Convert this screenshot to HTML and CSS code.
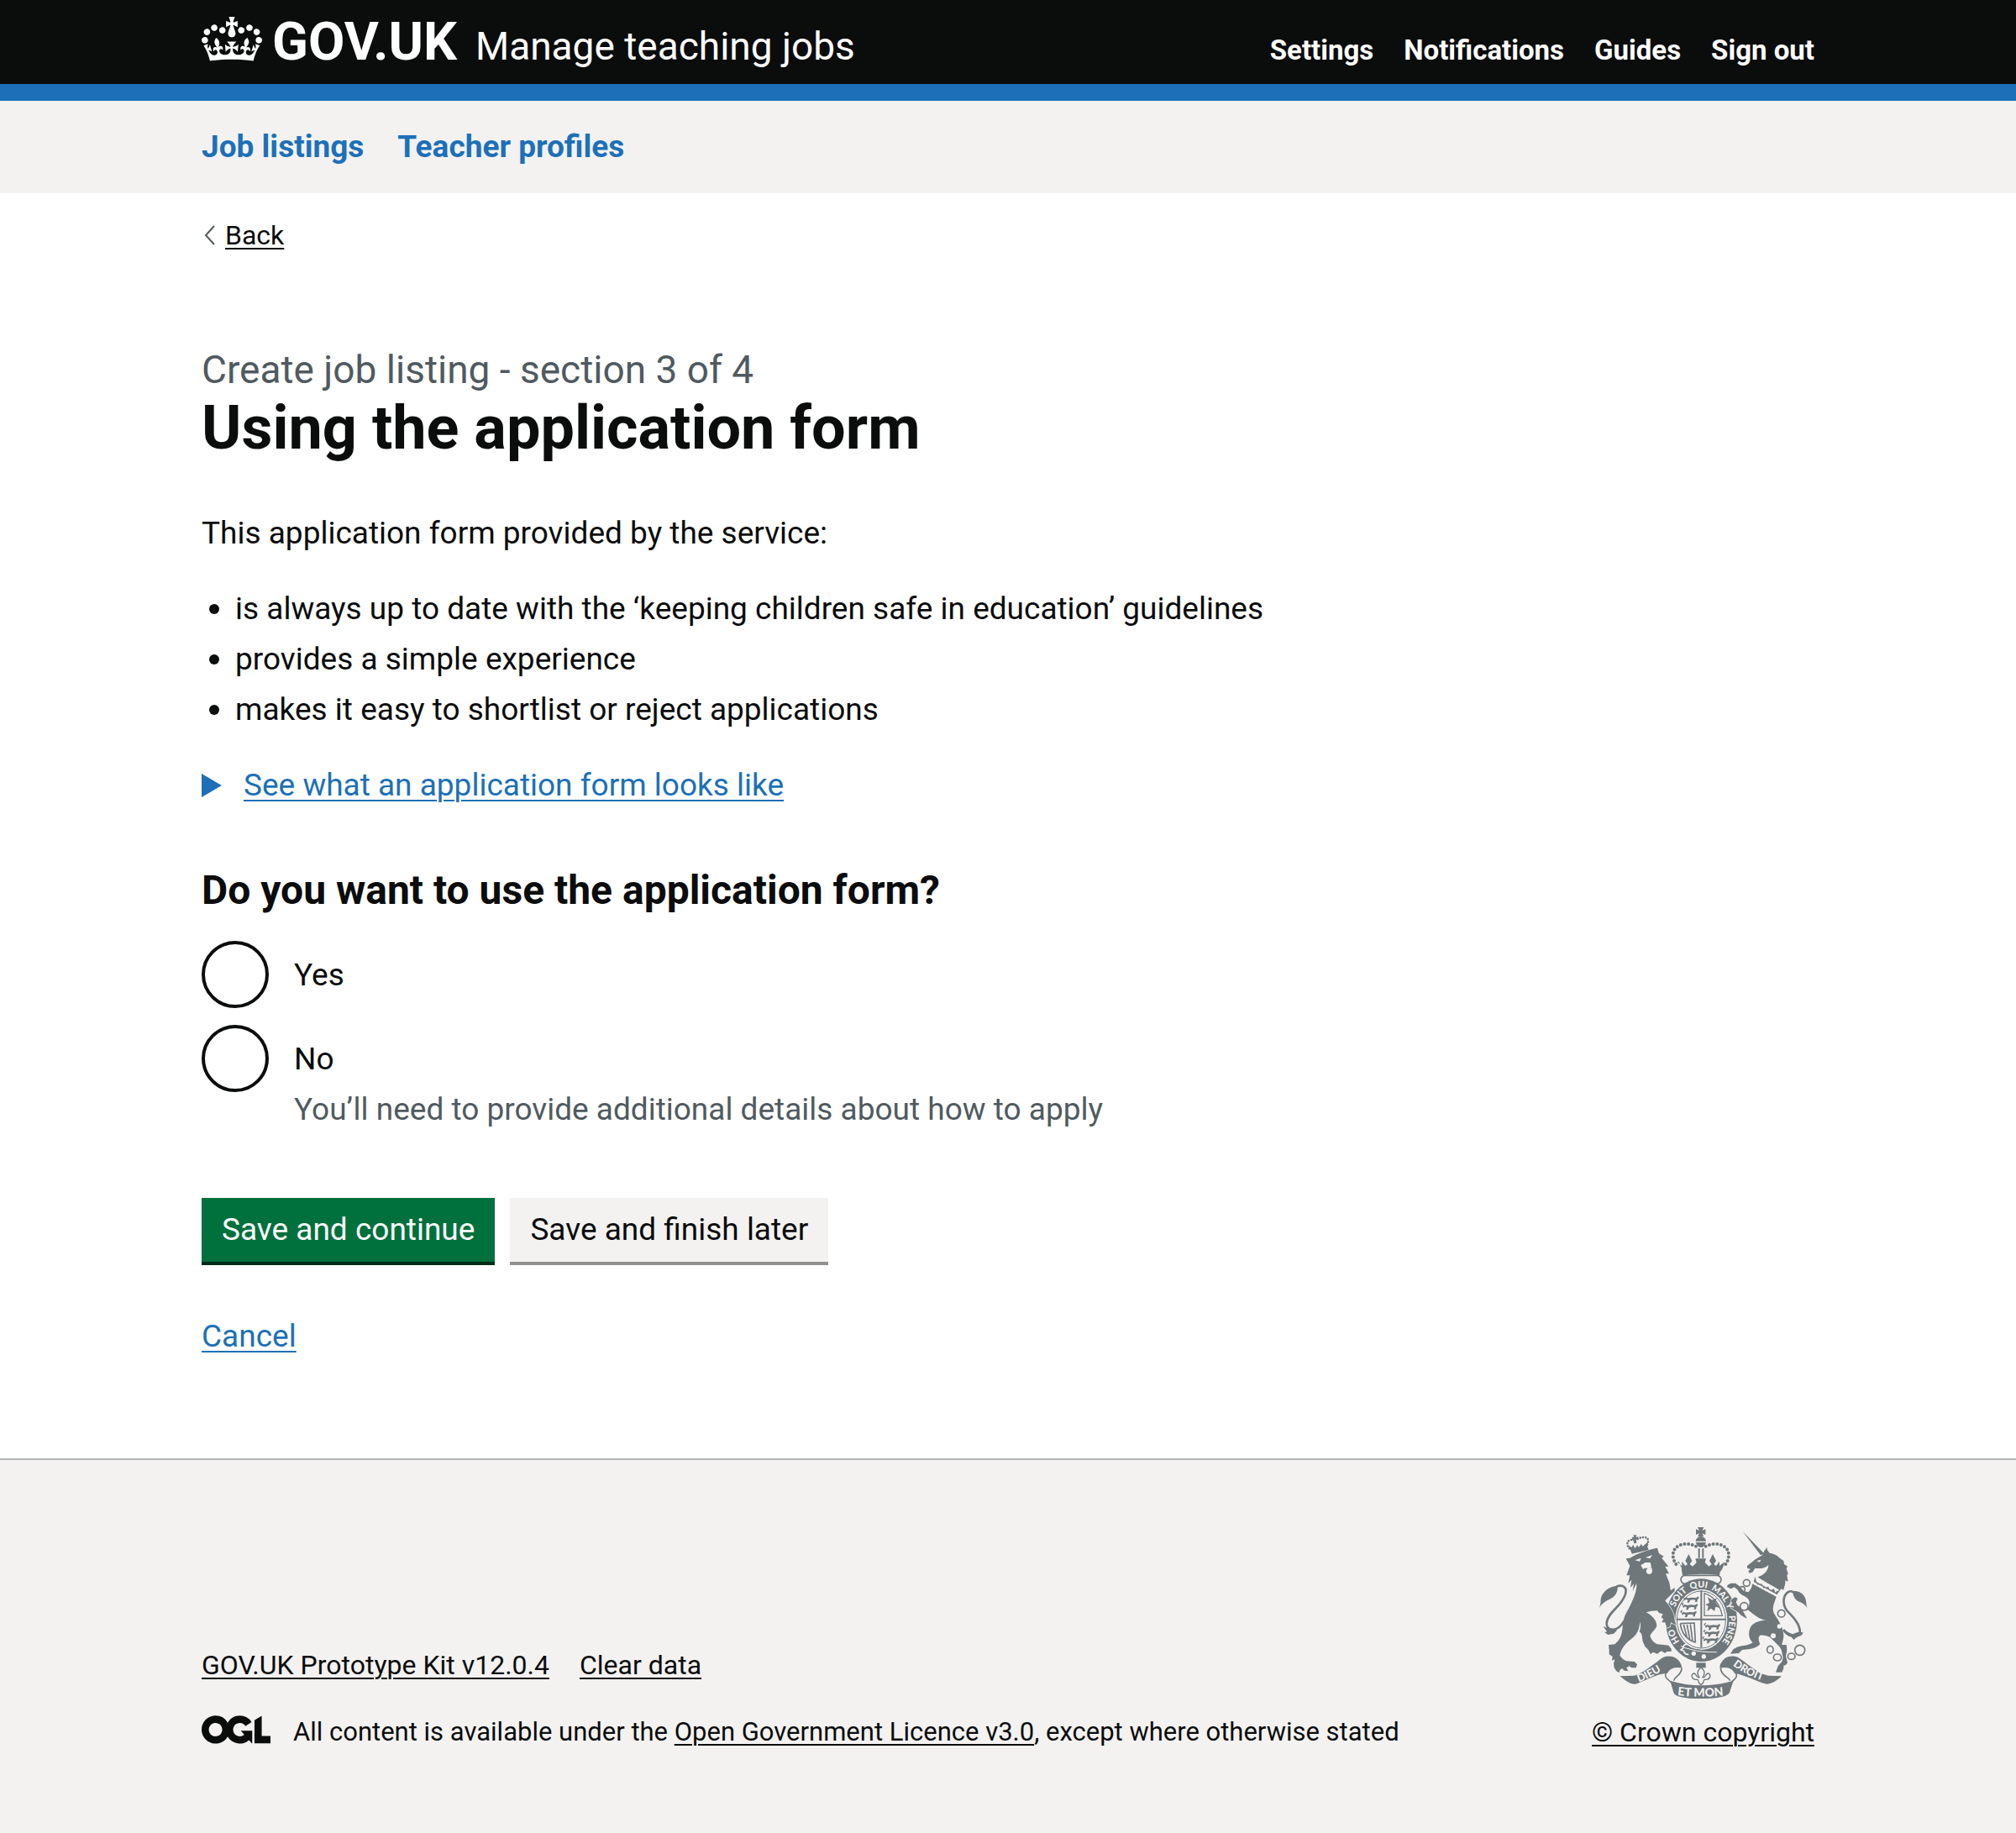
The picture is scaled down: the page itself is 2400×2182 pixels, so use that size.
FILE: index.html
```
<!DOCTYPE html>
<html lang="en">
<head>
<meta charset="utf-8">
<meta name="viewport" content="width=device-width, initial-scale=1">
<title>Using the application form - Manage teaching jobs - GOV.UK</title>
<link rel="stylesheet" href="styles.css">
</head>
<body>
<header class="header">
  <div class="container header-inner">
    <a class="logo" href="#">
      <svg class="crown" viewBox="0 0 132 97" aria-hidden="true"><path fill="currentColor" fill-rule="evenodd" d="M25 30.2c3.5 1.5 7.7-.2 9.1-3.7 1.5-3.6-.2-7.8-3.9-9.2-3.6-1.4-7.6.3-9.1 3.9-1.4 3.5.3 7.5 3.9 9zM9 39.5c3.6 1.5 7.8-.2 9.2-3.7 1.5-3.6-.2-7.8-3.9-9.1-3.6-1.5-7.6.2-9.1 3.8-1.4 3.5.3 7.5 3.8 9zM4.4 57.2c3.5 1.5 7.7-.2 9.1-3.8 1.5-3.6-.2-7.7-3.9-9.1-3.5-1.5-7.6.3-9.1 3.8-1.4 3.5.3 7.6 3.9 9.1zm38.3-21.4c3.5 1.5 7.7-.2 9.1-3.8 1.5-3.6-.2-7.7-3.9-9.1-3.6-1.5-7.6.3-9.1 3.8-1.3 3.6.4 7.7 3.9 9.1zm64.4-5.6c-3.6 1.5-7.8-.2-9.1-3.7-1.5-3.6.2-7.8 3.8-9.2 3.6-1.4 7.7.3 9.2 3.9 1.3 3.5-.4 7.5-3.9 9zm15.9 9.3c-3.6 1.5-7.7-.2-9.1-3.7-1.5-3.6.2-7.8 3.7-9.1 3.6-1.5 7.7.2 9.2 3.8 1.5 3.5-.3 7.5-3.8 9zm4.7 17.7c-3.6 1.5-7.8-.2-9.2-3.8-1.5-3.6.2-7.7 3.9-9.1 3.6-1.5 7.7.3 9.2 3.8 1.3 3.5-.4 7.6-3.9 9.1zM89.3 35.8c-3.6 1.5-7.8-.2-9.2-3.8-1.4-3.6.2-7.7 3.9-9.1 3.6-1.5 7.7.3 9.2 3.8 1.4 3.6-.3 7.7-3.9 9.1zM69.7 17.7l8.9 4.7V9.3l-8.9 2.8c-.2-.3-.5-.6-.9-.9L72.4 0H59.6l3.5 11.2c-.3.3-.6.5-.9.9l-8.8-2.8v13.1l8.8-4.7c.3.3.6.7.9.9l-5 15.4v.1c-.2.8-.4 1.6-.4 2.4 0 4.1 3.1 7.5 7 8.1h.2c.3 0 .7.1 1 .1.4 0 .7 0 1-.1h.2c4-.6 7.1-4.1 7.1-8.1 0-.8-.1-1.7-.4-2.4V34l-5.1-15.4c.4-.2.7-.6 1-.9zM66 92.8c16.9 0 32.8 1.1 47.1 3.2 4-16.9 8.9-26.7 14-33.5l-9.6-3.4c1 4.9 1.1 7.2 0 10.2-1.5-1.4-3-4.3-4.2-8.7L108.6 76c2.8-2 5-3.2 7.5-3.3-4.4 9.4-10 11.9-13.6 11.2-4.3-.8-6.3-4.6-5.6-7.9 1-4.7 5.7-5.9 8-.5 4.3-8.7-3-11.4-7.6-8.8 7.1-7.2 7.9-13.5 2.1-21.1-8 6.1-8.1 12.3-4.5 20.8-4.7-5.4-12.1-2.5-9.5 6.2 3.4-5.2 7.9-2 7.2 3.1-.6 4.3-6.4 7.8-13.5 7.2-10.3-.9-10.9-8-11.2-13.8 2.5-.5 7.1 1.8 11 7.3L80.2 60c-4.1 4.4-8 5.3-12.3 5.4 1.4-4.4 8-11.6 8-11.6H55.5s6.4 7.2 7.9 11.6c-4.2-.1-8-1-12.3-5.4l1.4 16.4c3.9-5.5 8.5-7.7 10.9-7.3-.3 5.8-.9 12.8-11.1 13.8-7.2.6-12.9-2.9-13.5-7.2-.7-5 3.8-8.3 7.1-3.1 2.7-8.7-4.6-11.6-9.4-6.2 3.7-8.5 3.6-14.7-4.6-20.8-5.8 7.6-5 13.9 2.2 21.1-4.7-2.6-11.9.1-7.7 8.8 2.3-5.5 7.1-4.2 8.1.5.7 3.3-1.3 7.1-5.7 7.9-3.5.7-9-1.8-13.5-11.2 2.5.1 4.7 1.3 7.5 3.3l-4.7-15.4c-1.2 4.4-2.7 7.2-4.3 8.7-1.1-3-.9-5.3 0-10.2l-9.5 3.4c5 6.9 9.9 16.7 14 33.5 14.8-2.1 30.8-3.2 47.7-3.2z"/></svg>
      <span class="logo-text">GOV.UK</span>
      <span class="service-name">Manage teaching jobs</span>
    </a>
    <nav class="account-nav" aria-label="Account">
      <a href="#">Settings</a>
      <a href="#">Notifications</a>
      <a href="#">Guides</a>
      <a href="#">Sign out</a>
    </nav>
  </div>
</header>

<nav class="primary-nav" aria-label="Primary">
  <div class="container primary-nav-inner">
    <a href="#">Job listings</a>
    <a href="#">Teacher profiles</a>
  </div>
</nav>

<div class="container">
  <a class="back-link" href="#">
    <svg class="back-icon" viewBox="0 0 14 24" aria-hidden="true"><path d="M13 1 3 12l10 11" fill="none" stroke="#505a5f" stroke-width="2"/></svg>
    <span class="back-text">Back</span>
  </a>

  <main class="main">
    <span class="caption">Create job listing - section 3 of 4</span>
    <h1 class="heading-xl">Using the application form</h1>

    <p class="body-text">This application form provided by the service:</p>
    <ul class="bullets">
      <li>is always up to date with the ‘keeping children safe in education’ guidelines</li>
      <li>provides a simple experience</li>
      <li>makes it easy to shortlist or reject applications</li>
    </ul>

    <details class="details">
      <summary><span class="details-text">See what an application form looks like</span></summary>
    </details>

    <form class="form">
      <fieldset class="fieldset">
        <legend class="heading-m">Do you want to use the application form?</legend>
        <div class="radios">
          <div class="radio-item">
            <input class="radio" type="radio" name="use-form" id="use-form-yes" value="yes">
            <label class="radio-label" for="use-form-yes">Yes</label>
          </div>
          <div class="radio-item">
            <input class="radio" type="radio" name="use-form" id="use-form-no" value="no" aria-describedby="use-form-hint">
            <label class="radio-label" for="use-form-no">No</label>
            <div class="hint" id="use-form-hint">You’ll need to provide additional details about how to apply</div>
          </div>
        </div>
      </fieldset>
      <div class="button-group">
        <button class="button" type="submit">Save and continue</button>
        <button class="button button-secondary" type="button">Save and finish later</button>
      </div>
    </form>

    <a class="link" href="#">Cancel</a>
  </main>
</div>

<footer class="footer">
  <div class="container footer-inner">
    <div class="footer-meta">
      <div class="footer-links">
        <a href="#">GOV.UK Prototype Kit v12.0.4</a>
        <a href="#">Clear data</a>
      </div>
      <div class="licence">
        <svg class="ogl" viewBox="0 0 483 196" aria-hidden="true"><path fill="currentColor" d="M421.5 142.8V.1l-50.7 32.3v161.1h112.4v-50.7zm-122.3-9.6A47.12 47.12 0 0 1 221 97.8c0-26 21.1-47.1 47.1-47.1 16.7 0 31.4 8.7 39.7 21.8l42.7-27.2A97.63 97.63 0 0 0 268.1 0c-36.5 0-68.3 20.1-85.1 49.7A98 98 0 0 0 97.8 0C43.9 0 0 43.9 0 97.8s43.9 97.8 97.8 97.8c36.5 0 68.3-20.1 85.1-49.7a97.76 97.76 0 0 0 149.6 25.4l19.4 22.2h3v-87.8h-80l24.3 27.5zM97.8 145c-26 0-47.1-21.1-47.1-47.1s21.1-47.1 47.1-47.1 47.1 21.1 47.1 47.1S123.8 145 97.8 145"/></svg>
        <span>All content is available under the <a href="#">Open Government Licence v3.0</a>, except where otherwise stated</span>
      </div>
    </div>
    <div class="copyright">
      <svg class="crest" viewBox="72 54 750 612" aria-hidden="true">
        <defs>
          <path id="garter" d="M371 473A100 117 0 1 1 505 473"/>
          <path id="scroll-left" d="M214 608Q262 592 322 550"/>
          <path id="scroll-right" d="M550 546Q600 586 672 606"/>
          <path id="scroll-mid" d="M352 654Q438 664 526 654"/>
          <g id="passant"><path d="M0 8l8-6 8 3 14-2 14 1 8-5 3 5-5 6-2 9h-7l1-7-10-1-9 2-3 8h-8l3-8-6-4-5 5zM0 6c-6-3-4-9 3-10l2 3c-5 0-5 3-2 5z"/></g>
        </defs>
        <g fill="#6f777b">
          <!-- central crown -->
          <path d="M426 54h22l-6 12 12-5v20l-12-5 6 12h-22l6-12-12 5v-20l12 5zM419 104a18 16 0 0 1 37 0zM419 108h37q-6 18-18 18t-19-18zM428 130h6v34h-6zM442 130h6v34h-6z"/>
          <g fill="none" stroke="#6f777b" stroke-width="12" stroke-linecap="round" stroke-dasharray="0 14"><path d="M420 122c-28-16-82-10-82 32 0 12 4 22 12 34M455 122c28-16 82-10 82 32 0 12-4 22-12 34"/></g>
          <path d="M352 178l18 14 0-16 12 16 8-6-8-12 12-24 12 24-8 12 10 8 14-14-4-14h38l-4 14 14 14 10-8-8-12 12-24 12 24-8 12 8 6 12-16 0 16 18-14c-2 16-10 30-16 36q-64-14-128 0c-6-8-14-20-18-36z"/>
          <path d="M368 202q70-14 140 0l-4 24q-66-10-132 0z"/>
          <rect x="366" y="226" width="144" height="30" rx="15" fill="#f3f2f1" stroke="#6f777b" stroke-width="5"/>
          <!-- garter and shield -->
          <ellipse cx="439" cy="386" rx="128" ry="148"/>
          <ellipse cx="439" cy="384" rx="93" ry="108" fill="#f3f2f1"/>
          <path d="M436 280h6v204h-6zM350 380h176v6H350z"/>
          <ellipse cx="439" cy="384" rx="87" ry="102" fill="none" stroke="#6f777b" stroke-width="3"/>
          <use href="#passant" x="376" y="302"/><use href="#passant" x="372" y="328"/><use href="#passant" x="368" y="354"/>
          <use href="#passant" x="452" y="400"/><use href="#passant" x="450" y="424"/><use href="#passant" x="446" y="448"/>
          <path d="M450 290q50 16 64 80h-64z" fill="none" stroke="#6f777b" stroke-width="4"/>
          <path d="M462 304l16 10 16-6-4 14 14 20-14-4-4 16-12-10-14 10 4-18-10-6 14-6z"/>
          <path d="M364 398l50-2 4 70M364 398c4 26 12 52 54 68M376 402l12 46M388 402l10 52M400 400l8 60" fill="none" stroke="#6f777b" stroke-width="5"/>
          <path d="M366 470l34 16 56 8 30-14 26 16-16 20-42 16-50-6-34-16z"/>
          <path d="M366 478q14 8 34 12 40 12 94 10" fill="none" stroke="#f3f2f1" stroke-width="3"/>
          <path d="M388 472q-14 0-14 14l-8 6 10 4q4 14 18 12" fill="none" stroke="#f3f2f1" stroke-width="5"/>
          <circle cx="412" cy="505" r="8" fill="#f3f2f1"/><circle cx="448" cy="516" r="8" fill="#f3f2f1"/>
          <!-- lion -->
          <g transform="translate(60 42)">
            <path stroke="#f3f2f1" stroke-width="4" paint-order="stroke" d="M110 124L124 122C150 105 190 92 222 86L228 106 245 116 238 122 262 152 250 152 264 178 252 178 264 208C268 220 268 232 270 238L284 228 284 240 262 262 250 274C270 300 282 315 284 345L290 362 270 352 268 366 256 372 250 352 238 352 244 340 236 334 242 322 228 318 222 310C205 310 195 312 182 316 205 328 220 345 220 365 215 378 200 388 196 400 200 415 210 425 222 430L245 432 262 434 272 446 272 456 256 456 250 462 236 454 222 464 206 458 198 466 190 450 178 438 170 420 166 394 158 384C164 372 162 350 160 350 158 375 150 395 130 410 110 425 92 445 88 470 95 480 102 486 112 490L140 492 150 502 146 514 130 514 122 508 112 514 118 526 104 524 96 516 88 522 86 532 76 526 68 514 66 500 70 484 60 488 62 474 50 466 50 452 48 432 70 430C88 415 95 400 98 370 98 345 106 325 118 305 134 275 150 240 148 212L134 240 138 214 126 228 130 200 118 212 124 184 112 184 124 150z"/>
            <path d="M12 304C24 285 16 272 24 256 36 234 56 222 80 222 82 246 70 262 50 270 34 278 22 286 12 304zM28 366L50 374 70 374 78 380 66 392 46 396 34 388 42 384z"/>
            <path d="M104 346C85 378 60 385 45 370 30 345 60 315 75 300 100 275 120 240 104 226 95 218 80 220 72 228" fill="none" stroke="#6f777b" stroke-width="8"/>
            <path fill="#f3f2f1" d="M142 130l22-8-5 12zM180 120l24-9-8 13zM163 148l16-10 18 0 4 16-10 4-14 0-6 4zM183 164a10 12 0 1 0 21 6l-2-14-14 2z"/>
            <!-- lion crown -->
            <path d="M128 98l60-14 3 9-60 14zM118 76l12 8 6-10 6 14 8-12 6 8 8-12 6 8 14-12 6-6-4 24-58 12zM139 48l-3-8h12l-2 8 8-2v12l-8-3 2 14h-10l1-14-7 3v-11z"/>
            <path d="M122 88C104 66 124 50 142 60M186 74C198 48 176 40 148 56" fill="none" stroke="#6f777b" stroke-width="8" stroke-linecap="round" stroke-dasharray="0 10"/>
          </g>
          <!-- unicorn -->
          <g transform="translate(435 42)">
            <path d="M152 27L228 106 216 112z"/>
            <path d="M238 84L240 94 248 104C262 106 276 112 284 122L298 132 300 144 312 152 308 160 314 178 310 184 314 206 304 202 304 212 298 236 290 232 284 238C270 226 240 214 205 190 226 184 244 168 244 146 230 162 205 160 196 158L188 172 176 176 172 168 180 162 168 158 168 150 198 126 222 112 228 98z"/>
            <path stroke="#f3f2f1" stroke-width="4" paint-order="stroke" d="M186 214L272 260C262 290 256 300 264 320 280 345 298 370 298 400 298 415 292 425 292 432L308 432C312 450 308 465 306 472L312 496 306 504 298 506 298 516 292 530 270 530 278 508 292 492 296 478 290 450C282 432 262 420 250 405 240 398 222 396 214 398 205 405 210 418 214 430 205 440 190 446 172 448L150 450 138 462 108 464 118 448 132 440C150 434 170 436 188 424 172 410 170 385 182 365 195 350 215 345 235 345 210 340 190 322 172 308L150 306 160 325 168 338 158 334 146 326 136 316 110 300 108 286 112 270 124 262 134 266 128 280 134 292 150 300 170 302C176 290 178 280 174 272 168 262 158 258 150 254L140 246 134 236 122 226 110 232 96 226 98 218 110 212 126 212 140 222 156 240 172 244C180 236 186 226 186 214z"/>
            <path d="M192 205L276 251" stroke="#6f777b" stroke-width="4"/>
            <path d="M196 188l-4 16 84 46 10-14-12 4-6 6-4-14-10 4-6 2-4-14-12 4-6 2-6-16-10 2-6 2z"/>
            <path d="M386 308C376 290 382 280 374 262 366 246 350 238 330 240 332 262 342 274 358 280 372 286 380 294 386 308zM296 375L316 388 330 394 350 386 368 388 362 398 346 404 334 414 326 404 314 400 310 392z"/>
            <path d="M298 378C310 400 345 410 356 390 360 360 330 330 310 310 292 285 296 255 315 243 325 238 335 244 340 250" fill="none" stroke="#6f777b" stroke-width="8"/>
            <path fill="#f3f2f1" d="M202 132l16-4-7 9z"/>
          </g>
          <!-- scroll and fleur-de-lis -->
          <path d="M148 586l52-2c40-14 70-44 104-66 26-10 58 0 66 36-24-6-46 6-52 22-34-2-80 28-114 38-18 2-36-12-56-28zM726 586l-48-2c-44-12-74-44-108-66-30-10-58 2-66 36 28-8 48 8 54 22 34 4 80 30 114 38 20 0 36-12 54-28z"/>
          <path d="M328 602q110 34 226 0l-14 42q-10 22-102 22t-98-22z"/>
          <path d="M368 554c-30-6-62 10-56 34 8 16 16 12 20 22M508 554c30-6 62 10 56 34-4 12-12 10-16 20M342 602c-4-12 24-14 28-46M540 602c4-12-32-14-32-46" fill="none" stroke="#6f777b" stroke-width="5"/>
          <path d="M421 538h34v18h-34z"/>
          <path d="M438 554c16 14 14 26 6 36 10 4 10-12 18-14 12 0 12 20-4 22l-8 0-6 14-6 4-6-4-6-14-8 0c-16-2-16-22-4-22 8 2 8 18 18 14-8-10-10-22 6-36z" fill="#f3f2f1" stroke="#6f777b" stroke-width="4"/>
        </g>
        <!-- chain -->
        <g fill="none" stroke="#6f777b" stroke-width="5">
          <circle cx="601" cy="253" r="12"/><circle cx="585" cy="276" r="10"/><circle cx="592" cy="337" r="14" fill="#f3f2f1"/><circle cx="725" cy="362" r="13" fill="#f3f2f1"/><ellipse cx="685" cy="491" rx="11" ry="13"/><ellipse cx="711" cy="519" rx="14" ry="12"/><ellipse cx="761" cy="515" rx="13" ry="11"/><circle cx="791" cy="493" r="18"/>
        </g>
        <circle cx="718" cy="408" r="8" fill="#f3f2f1"/><circle cx="696" cy="442" r="9" fill="#f3f2f1"/>
        <g class="motto" fill="#f3f2f1">
          <text font-size="32"><textPath href="#garter" startOffset="14">HO</textPath></text>
          <text font-size="32"><textPath href="#garter" startOffset="142">SOIT</textPath></text>
          <text font-size="32"><textPath href="#garter" startOffset="228">QUI</textPath></text>
          <text font-size="32"><textPath href="#garter" startOffset="302">MAL Y</textPath></text>
          <text font-size="32"><textPath href="#garter" startOffset="420">PENSE</textPath></text>
          <text font-size="38"><textPath href="#scroll-left" startOffset="2">DIEU</textPath></text>
          <text font-size="38"><textPath href="#scroll-right" startOffset="2">DROIT</textPath></text>
          <text font-size="42"><textPath href="#scroll-mid" startOffset="2">ET MON</textPath></text>
        </g>
      </svg>
      <a href="#">© Crown copyright</a>
    </div>
  </div>
</footer>
</body>
</html>
```
FILE: styles.css
```
* {
  box-sizing: border-box;
}

body {
  margin: 0;
  background: #fff;
  color: #0b0c0c;
  font: 400 37px/50px Roboto, "Liberation Sans", sans-serif;
}

a {
  color: inherit;
  text-decoration-thickness: 2px;
  text-underline-offset: 5px;
}

svg {
  display: block;
  flex: none;
}

.container {
  max-width: 1920px;
  margin: 0 auto;
}

.header {
  background: #0b0c0c;
  border-bottom: 20px solid #1d70b8;
  color: #fff;
}

.header-inner {
  display: flex;
  justify-content: space-between;
  align-items: baseline;
  padding: 20px 0;
}

.header a {
  text-decoration: none;
}

.logo {
  display: flex;
  align-items: baseline;
  line-height: 60px;
}

.crown {
  width: 72px;
  height: 53px;
  margin-right: 12px;
  align-self: flex-start;
}

.logo-text {
  margin-right: 22px;
  font-size: 63px;
  font-weight: 700;
}

.service-name {
  font-size: 46px;
  line-height: 48px;
}

.account-nav {
  display: flex;
  gap: 36px;
  font-size: 33px;
  font-weight: 700;
  line-height: 36px;
}

.primary-nav {
  background: #f3f2f1;
  color: #1d70b8;
}

.primary-nav-inner {
  display: flex;
  gap: 40px;
  padding: 30px 0;
  font-weight: 700;
}

.primary-nav a {
  text-decoration: none;
}

.back-link {
  display: flex;
  align-items: center;
  gap: 12px;
  width: max-content;
  margin-top: 30px;
  font-size: 32px;
  line-height: 40px;
  text-decoration: none;
}

.back-icon {
  width: 14px;
  height: 24px;
  margin-left: 2px;
}

.back-text {
  text-decoration: underline 2px;
  text-underline-offset: 4px;
}

.main {
  padding: 110px 0 120px;
}

.caption {
  display: block;
  color: #505a5f;
  font-size: 46px;
  line-height: 60px;
}

.heading-xl {
  margin: 0 0 60px;
  font-size: 72px;
  font-weight: 700;
  line-height: 80px;
}

.body-text {
  margin: 0 0 40px;
}

.bullets {
  display: grid;
  gap: 10px;
  margin: 0 0 40px;
  padding: 0;
  list-style: none;
}

.bullets li {
  display: flex;
  align-items: center;
}

.bullets li::before {
  content: "";
  width: 12px;
  height: 12px;
  margin: 0 19px 0 9px;
  border-radius: 50%;
  background: #0b0c0c;
}

.details {
  margin-bottom: 70px;
  color: #1d70b8;
}

.details summary {
  display: flex;
  align-items: center;
  gap: 26px;
  width: max-content;
  list-style: none;
}

.details summary::before {
  content: "";
  border: solid transparent;
  border-width: 14px 0 14px 24px;
  border-left-color: #1d70b8;
}

.details-text,
.link {
  text-decoration: underline 2px;
  text-underline-offset: 5px;
}

.link {
  color: #1d70b8;
}

.fieldset {
  margin: 0;
  padding: 0;
  border: 0;
}

.heading-m {
  margin-bottom: 30px;
  padding: 0;
  font-size: 48px;
  font-weight: 700;
  line-height: 60px;
}

.radios {
  display: grid;
  gap: 20px;
}

.radio-item {
  display: grid;
  grid-template-columns: 80px 1fr;
  column-gap: 30px;
}

.radio {
  grid-row: span 2;
  appearance: none;
  width: 80px;
  height: 80px;
  margin: 0;
  border: 4px solid #0b0c0c;
  border-radius: 50%;
  background: #fff;
}

.radio:checked {
  background: radial-gradient(#0b0c0c 20px, #fff 21px);
}

.radio-label {
  padding: 16px 0 10px;
}

.hint {
  grid-column: 2;
  color: #505a5f;
}

.button-group {
  display: flex;
  gap: 18px;
  margin: 80px 0 64px;
}

.form {
  margin: 0;
}

.button {
  padding: 13px 24px;
  border: 0;
  box-shadow: 0 4px 0 #002d18;
  background: #00703c;
  color: #fff;
  font: inherit;
}

.button-secondary {
  box-shadow: 0 4px 0 #929191;
  background: #f3f2f1;
  color: #0b0c0c;
}

.footer {
  border-top: 2px solid #b1b4b6;
  background: #f3f2f1;
  font-size: 32px;
  line-height: 40px;
}

.footer a {
  text-underline-offset: 4px;
}

.footer-inner {
  display: flex;
  justify-content: space-between;
  align-items: flex-end;
  padding: 80px 0 100px;
}

.footer-meta {
  display: grid;
  gap: 40px;
}

.footer-links {
  display: flex;
  gap: 36px;
}

.licence {
  display: flex;
  gap: 27px;
  font-size: 31px;
}

.ogl {
  width: 82px;
  height: 34px;
}

.copyright {
  display: flex;
  flex-direction: column;
  align-items: center;
  gap: 20px;
}

.crest {
  width: 250px;
  height: 204px;
}

.motto {
  font-family: Lato, sans-serif;
  font-weight: 900;
}
```
